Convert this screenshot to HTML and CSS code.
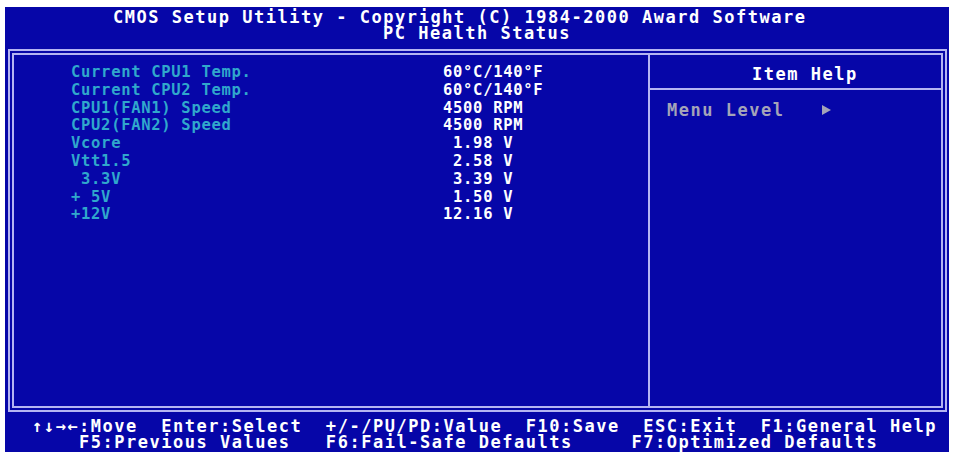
FILE: index.html
```html
<!DOCTYPE html>
<html>
<head>
<meta charset="utf-8">
<link rel="stylesheet" href="styles.css">
</head>
<body>
<div class="screen">
  <div class="hdr">
    <div class="hdr-line l1">CMOS Setup Utility - Copyright (C) 1984-2000 Award Software</div>
    <div class="hdr-line l2">PC Health Status</div>
  </div>
  <div class="frame">
    <div class="inner">
      <div class="items">
        <div class="row"><span class="lbl">Current CPU1 Temp.</span><span class="val">60°C/140°F</span></div>
        <div class="row"><span class="lbl">Current CPU2 Temp.</span><span class="val">60°C/140°F</span></div>
        <div class="row"><span class="lbl">CPU1(FAN1) Speed</span><span class="val">4500 RPM</span></div>
        <div class="row"><span class="lbl">CPU2(FAN2) Speed</span><span class="val">4500 RPM</span></div>
        <div class="row"><span class="lbl">Vcore</span><span class="val"> 1.98 V</span></div>
        <div class="row"><span class="lbl">Vtt1.5</span><span class="val"> 2.58 V</span></div>
        <div class="row"><span class="lbl"> 3.3V</span><span class="val"> 3.39 V</span></div>
        <div class="row"><span class="lbl">+ 5V</span><span class="val"> 1.50 V</span></div>
        <div class="row"><span class="lbl">+12V</span><span class="val">12.16 V</span></div>
      </div>
      <div class="help">
        <div class="help-title">Item Help</div>
        <div class="help-body"><span class="menu">Menu Level   </span><span class="tri"></span></div>
      </div>
    </div>
  </div>
  <div class="ftr">
    <div class="ftr-line">↑↓→←:Move  Enter:Select  +/-/PU/PD:Value  F10:Save  ESC:Exit  F1:General Help</div>
    <div class="ftr-line">    F5:Previous Values   F6:Fail-Safe Defaults     F7:Optimized Defaults</div>
  </div>
</div>
</body>
</html>
```

FILE: styles.css
```css
html, body {
  margin: 0;
  padding: 0;
  background: #ffffff;
}

body {
  width: 954px;
  height: 454px;
  overflow: hidden;
}

.screen {
  margin: 7px 0 0 5px;
  width: 944px;
  height: 445px;
  background: #0606a8;
  overflow: hidden;
  font-family: "DejaVu Sans Mono", "Liberation Mono", monospace;
  font-weight: bold;
  color: #ffffff;
  display: flex;
  flex-direction: column;
}

.hdr {
  height: 42px;
  box-sizing: border-box;
  padding-top: 3.25px;
  flex: none;
}

.hdr-line {
  font-size: 17px;
  line-height: 15.5px;
  letter-spacing: 1.52px;
  white-space: pre;
}

.l1 { padding-left: 108px; }
.l2 { padding-left: 378px; }

.frame {
  margin-left: 3px;
  width: 939px;
  height: 363px;
  box-sizing: border-box;
  border: 2px solid #b4b4f2;
  padding: 2px;
  flex: none;
}

.inner {
  height: 100%;
  box-sizing: border-box;
  border: 2px solid #b4b4f2;
  display: flex;
}

.items {
  width: 636px;
  box-sizing: border-box;
  border-right: 2px solid #b4b4f2;
  padding: 9px 0 0 57px;
  flex: none;
}

.row {
  display: grid;
  grid-template-columns: 372px auto;
  height: 17.8px;
  font-size: 15.5px;
  line-height: 17.8px;
  letter-spacing: 0.7px;
  white-space: pre;
}

.lbl { color: #30a8cc; }
.val { color: #ffffff; }

.help {
  flex: 1;
  display: flex;
  flex-direction: column;
}

.help-title {
  height: 35px;
  box-sizing: border-box;
  border-bottom: 2px solid #b4b4f2;
  padding: 12px 0 0 102px;
  font-size: 17px;
  line-height: 15px;
  letter-spacing: 1.52px;
  white-space: pre;
}

.help-body {
  padding: 12.6px 0 0 17px;
  font-size: 17px;
  line-height: 15px;
  letter-spacing: 1.52px;
  white-space: pre;
  color: #a4a4b8;
  display: flex;
  align-items: flex-start;
}

.tri {
  display: inline-block;
  width: 0;
  height: 0;
  margin-top: 2px;
  margin-left: 2px;
  border-top: 5px solid transparent;
  border-bottom: 5px solid transparent;
  border-left: 9px solid #a4a4b8;
}

.ftr {
  padding: 5.5px 0 0 27px;
  flex: none;
}

.ftr-line {
  font-size: 17px;
  line-height: 16px;
  letter-spacing: 1.52px;
  white-space: pre;
}
```
